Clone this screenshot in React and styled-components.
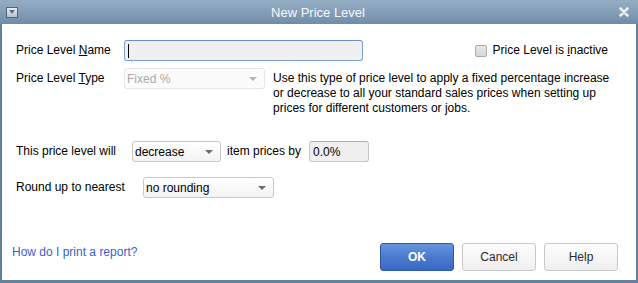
import styled, { createGlobalStyle } from 'styled-components';

const GlobalStyle = createGlobalStyle`
	html, body {
		margin: 0;
		padding: 0;
		background: #ffffff;
	}
	body {
		font-family: 'Liberation Sans', Arial, sans-serif;
		font-size: 12px;
		color: #000;
	}
	* {
		box-sizing: border-box;
	}
`;

const Window = styled.div`
	width: 638px;
	height: 283px;
	display: flex;
	flex-direction: column;
	background: #62809a;
	padding: 0 2px 3px 2px;
`;

const TitleBar = styled.div`
	height: 24px;
	margin: 0 -2px;
	display: flex;
	align-items: center;
	padding: 0 8px 0 6px;
	background: linear-gradient(#94adc4 0%, #86a0b9 45%, #6f8ca7 100%);
	color: #f6f8fb;
	font-size: 13px;
`;

const Title = styled.div`
	flex: 1;
	text-align: center;
`;

const SysIcon = styled.span`
	width: 12px;
	height: 11px;
	display: flex;
	align-items: center;
	justify-content: center;
	border: 1px solid #52677c;
	background: linear-gradient(#e9eef3, #b4c2cf);
`;

const CloseIcon = styled.span`
	width: 12px;
	height: 12px;
	display: flex;
	align-items: center;
	justify-content: center;
`;

const Body = styled.div`
	flex: 1;
	background: #ffffff;
	display: flex;
	flex-direction: column;
	padding: 16px 18px 9px 10px;
`;

const Row = styled.div`
	display: flex;
	align-items: ${(p) => (p.top ? 'flex-start' : 'center')};
	margin-top: ${(p) => p.gap || 0}px;
	padding-left: 4px;
`;

const Label = styled.div`
	width: ${(p) => p.w || 'auto'}px;
	flex-shrink: 0;
	white-space: nowrap;
	line-height: 21px;
	margin-left: ${(p) => p.ml || 0}px;
	margin-right: ${(p) => p.mr || 0}px;
`;

const Key = styled.span`
	text-decoration: underline;
	text-underline-offset: 1px;
`;

const TextField = styled.div`
	width: ${(p) => p.w}px;
	height: 21px;
	display: flex;
	align-items: center;
	padding-left: 3px;
	background: #f0f0f0;
	border: 1px solid ${(p) => (p.focused ? '#7b9fd6' : '#c6c6c6')};
	border-top-color: ${(p) => (p.focused ? '#6b90cc' : '#b0b0b0')};
	border-radius: 3px;
`;

const Caret = styled.span`
	width: 1px;
	height: 14px;
	background: #000;
`;

const Select = styled.div`
	width: ${(p) => p.w}px;
	height: 21px;
	display: flex;
	align-items: center;
	justify-content: space-between;
	padding: 0 7px 0 2px;
	border: 1px solid ${(p) => (p.disabled ? '#e6e6e6' : '#c8c8c8')};
	border-radius: 3px;
	background: ${(p) =>
		p.disabled ? '#fbfbfb' : 'linear-gradient(#ffffff, #f3f3f3)'};
	color: ${(p) => (p.disabled ? '#a9a9a9' : '#000')};
`;

const Arrow = styled.span`
	width: 0;
	height: 0;
	border-left: 4px solid transparent;
	border-right: 4px solid transparent;
	border-top: 4px solid ${(p) => (p.disabled ? '#b5b5b5' : '#6c6c6c')};
`;

const Description = styled.div`
	margin-left: 8px;
	margin-top: 3px;
	line-height: 15px;
	width: 350px;
`;

const CheckWrap = styled.label`
	margin-left: auto;
	margin-right: 10px;
	display: flex;
	align-items: center;
	gap: 6px;
	line-height: 21px;
`;

const Box = styled.span`
	width: 12px;
	height: 12px;
	border: 1px solid #a9a9a9;
	border-radius: 2px;
	background: linear-gradient(#e6e6e6, #d6d6d6);
`;

const Footer = styled.div`
	margin-top: auto;
	display: flex;
	align-items: flex-start;
`;

const HelpLink = styled.a`
	color: #3a5fcb;
	text-decoration: none;
	margin-top: 2px;
	line-height: 14px;
`;

const Buttons = styled.div`
	margin-left: auto;
	display: flex;
	gap: 8px;
`;

const Button = styled.button`
	width: 74px;
	height: 28px;
	font-family: 'Liberation Sans', Arial, sans-serif;
	font-size: 12px;
	border-radius: 3px;
	cursor: pointer;
	border: 1px solid ${(p) => (p.primary ? '#2e58a6' : '#c9c9c9')};
	background: ${(p) =>
		p.primary
			? 'linear-gradient(#6596dd, #4a7bcf 50%, #3a69c2)'
			: 'linear-gradient(#fdfdfd, #efefef)'};
	color: ${(p) => (p.primary ? '#ffffff' : '#2a2a2a')};
	font-weight: ${(p) => (p.primary ? 'bold' : 'normal')};
`;

export default function App() {
	return (
		<>
			<GlobalStyle />
			<Window>
				<TitleBar>
					<SysIcon>
						<svg width="6" height="4" viewBox="0 0 6 4">
							<path d="M0 0 H6 L3 4 Z" fill="#5d7186" />
						</svg>
					</SysIcon>
					<Title>New Price Level</Title>
					<CloseIcon>
						<svg width="10" height="10" viewBox="0 0 10 10">
							<path
								d="M1.5 1.5 L8.5 8.5 M8.5 1.5 L1.5 8.5"
								stroke="#e9eef3"
								strokeWidth="2.6"
								strokeLinecap="round"
							/>
						</svg>
					</CloseIcon>
				</TitleBar>
				<Body>
					<Row>
						<Label w={108}>
							Price Level <Key>N</Key>ame
						</Label>
						<TextField w={239} focused>
							<Caret />
						</TextField>
						<CheckWrap>
							<Box />
							<span>
								Price Level is <Key>i</Key>nactive
							</span>
						</CheckWrap>
					</Row>
					<Row top gap={7}>
						<Label w={108}>
							Price Level <Key>T</Key>ype
						</Label>
						<Select w={143} disabled>
							<span>Fixed %</span>
							<Arrow disabled />
						</Select>
						<Description>
							Use this type of price level to apply a fixed percentage increase
							<br />
							or decrease to all your standard sales prices when setting up
							<br />
							prices for different customers or jobs.
						</Description>
					</Row>
					<Row gap={25}>
						<Label w={116}>This price level will</Label>
						<Select w={89}>
							<span>decrease</span>
							<Arrow />
						</Select>
						<Label ml={6} mr={8}>
							item prices by
						</Label>
						<TextField w={60}>0.0%</TextField>
					</Row>
					<Row gap={15}>
						<Label w={127}>Round up to nearest</Label>
						<Select w={131}>
							<span>no rounding</span>
							<Arrow />
						</Select>
					</Row>
					<Footer>
						<HelpLink href="#">How do I print a report?</HelpLink>
						<Buttons>
							<Button primary>OK</Button>
							<Button>Cancel</Button>
							<Button>Help</Button>
						</Buttons>
					</Footer>
				</Body>
			</Window>
		</>
	);
}
